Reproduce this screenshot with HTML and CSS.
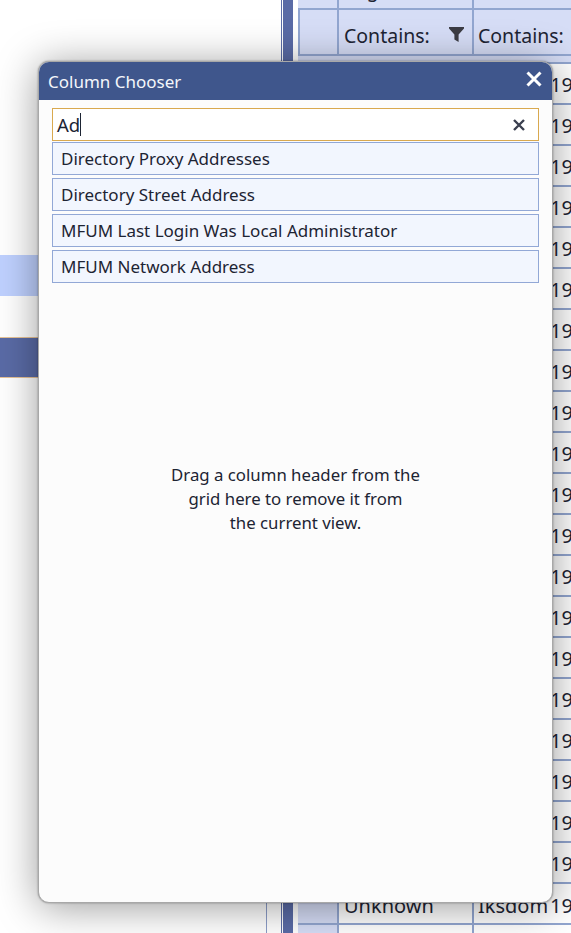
FILE: index.html

```html
<!DOCTYPE html>
<html lang="en">
<head>
    <meta charset="UTF-8">
    <meta name="viewport" content="width=device-width, initial-scale=1.0">
    <title>Column Chooser</title>
    <link rel="stylesheet" href="styles.css">
</head>
<body>
    <div class="page">
        <div class="side">
            <div class="side-row selected"></div>
            <div class="side-row active"></div>
            <div class="side-foot"></div>
        </div>
        <div class="gutter"></div>
        <div class="splitter"></div>

        <div class="grid">
            <div class="row head-top">
                <div class="cell indicator"></div>
                <div class="cell clipped">Logon</div>
                <div class="cell"></div>
                <div class="cell"></div>
            </div>
            <div class="row filter">
                <div class="cell indicator"></div>
                <div class="cell">Contains:
                    <svg class="funnel" viewBox="0 0 15 15"><path d="M0 0H15V1.5L9.6 7.4V15L5.4 12.6V7.4L0 1.5Z"/></svg>
                </div>
                <div class="cell">Contains:</div>
                <div class="cell"></div>
            </div>
            <div class="row"><div class="cell indicator"></div><div class="cell"></div><div class="cell"></div><div class="cell">19</div></div>
            <div class="row"><div class="cell indicator"></div><div class="cell"></div><div class="cell"></div><div class="cell">19,</div></div>
            <div class="row"><div class="cell indicator"></div><div class="cell"></div><div class="cell"></div><div class="cell">19</div></div>
            <div class="row"><div class="cell indicator"></div><div class="cell"></div><div class="cell"></div><div class="cell">19,</div></div>
            <div class="row"><div class="cell indicator"></div><div class="cell"></div><div class="cell"></div><div class="cell">19</div></div>
            <div class="row"><div class="cell indicator"></div><div class="cell"></div><div class="cell"></div><div class="cell">19,</div></div>
            <div class="row"><div class="cell indicator"></div><div class="cell"></div><div class="cell"></div><div class="cell">19</div></div>
            <div class="row"><div class="cell indicator"></div><div class="cell"></div><div class="cell"></div><div class="cell">19,</div></div>
            <div class="row"><div class="cell indicator"></div><div class="cell"></div><div class="cell"></div><div class="cell">19</div></div>
            <div class="row"><div class="cell indicator"></div><div class="cell"></div><div class="cell"></div><div class="cell">19,</div></div>
            <div class="row"><div class="cell indicator"></div><div class="cell"></div><div class="cell"></div><div class="cell">19,</div></div>
            <div class="row"><div class="cell indicator"></div><div class="cell"></div><div class="cell"></div><div class="cell">19</div></div>
            <div class="row"><div class="cell indicator"></div><div class="cell"></div><div class="cell"></div><div class="cell">19</div></div>
            <div class="row"><div class="cell indicator"></div><div class="cell"></div><div class="cell"></div><div class="cell">19,</div></div>
            <div class="row"><div class="cell indicator"></div><div class="cell"></div><div class="cell"></div><div class="cell">19</div></div>
            <div class="row"><div class="cell indicator"></div><div class="cell"></div><div class="cell"></div><div class="cell">19,</div></div>
            <div class="row"><div class="cell indicator"></div><div class="cell"></div><div class="cell"></div><div class="cell">19</div></div>
            <div class="row"><div class="cell indicator"></div><div class="cell"></div><div class="cell"></div><div class="cell">19</div></div>
            <div class="row"><div class="cell indicator"></div><div class="cell"></div><div class="cell"></div><div class="cell">19</div></div>
            <div class="row"><div class="cell indicator"></div><div class="cell"></div><div class="cell"></div><div class="cell">19</div></div>
            <div class="row last-data"><div class="cell indicator"></div><div class="cell">Unknown</div><div class="cell">Iksdom</div><div class="cell">19</div></div>
            <div class="row"><div class="cell indicator"></div><div class="cell"></div><div class="cell"></div><div class="cell"></div></div>
        </div>

        <div class="chooser">
            <div class="chooser-title">
                <span>Column Chooser</span>
                <svg class="close" viewBox="0 0 16 16"><path d="M1.5 1.5L14.5 14.5M14.5 1.5L1.5 14.5"/></svg>
            </div>
            <div class="chooser-body">
                <div class="search">
                    <span>Ad</span><span class="caret"></span>
                    <svg class="clear" viewBox="0 0 12 12"><path d="M1 1L11 11M11 1L1 11"/></svg>
                </div>
                <div class="column-list">
                    <div class="column-item">Directory Proxy Addresses</div>
                    <div class="column-item">Directory Street Address</div>
                    <div class="column-item">MFUM Last Login Was Local Administrator</div>
                    <div class="column-item">MFUM Network Address</div>
                </div>
                <p class="hint">Drag a column header from the<br>grid here to remove it from<br>the current view.</p>
            </div>
        </div>
    </div>
</body>
</html>
```

FILE: styles.css

```css
* {
    box-sizing: border-box;
}
body {
    margin: 0;
    font-family: "Noto Sans", "Open Sans", sans-serif;
    color: #1d2433;
    background-color: #fff;
}
.page {
    position: relative;
    display: flex;
    width: 571px;
    height: 933px;
    overflow: hidden;
}
.side {
    display: flex;
    flex-direction: column;
    flex: 0 0 267px;
    padding-top: 255px;
}
.side-row {
    height: 41px;
}
.side-row.selected {
    background-color: #bfd1ff;
}
.side-row.active {
    margin-top: 41px;
    background-color: #5a6ba6;
    border-top: 1px solid #e6c296;
    border-bottom: 1px solid #e6c296;
}
.side-foot {
    margin-top: auto;
    height: 100px;
    border-right: 1px solid #8c9dc8;
}
.gutter {
    flex: 0 0 15px;
    border-right: 1px solid #5a6ba6;
}
.splitter {
    flex: 0 0 10px;
    margin-left: 1px;
    margin-right: 5px;
    background-color: #5a6ba6;
}

/* grid behind the dialog */
.grid {
    flex: 1;
    min-width: 0;
}
.row {
    display: grid;
    grid-template-columns: 41px 135px 76px 1fr;
    grid-template-rows: 39px;
    height: 41px;
    border-bottom: 2px solid #92a6d0;
    font-size: 20px;
    line-height: 42px;
}
.cell {
    position: relative;
    padding-left: 5px;
    border-right: 2px solid #92a6d0;
    white-space: nowrap;
}
.cell:nth-child(3) {
    padding-left: 4px;
    border-right: none;
}
.cell:last-child {
    padding-left: 0;
    border-right: none;
}
.indicator {
    background-color: #d6ddf6;
}
.row.last-data {
    line-height: 44px;
}
.row.head-top {
    grid-template-rows: 8px;
    height: 10px;
    background-color: #d6ddf6;
    overflow: hidden;
}
/* only the descender of this label shows above the filter row */
.clipped {
    height: 22px;
    margin-top: -14px;
    line-height: 8px;
}
.row.filter {
    grid-template-rows: 46px;
    height: 54px;
    padding-bottom: 6px;
    background-color: #d6ddf6;
    font-size: 19.5px;
    line-height: 52px;
}
.row.filter .cell {
    border-bottom: 2px solid #92a6d0;
}
.row.filter .indicator {
    border-left: 2px solid #92a6d0;
}
.funnel {
    position: absolute;
    top: 17px;
    right: 8px;
    width: 15px;
    height: 15px;
    fill: #3c3c44;
}

/* column chooser */
.chooser {
    position: absolute;
    left: 38px;
    top: 61px;
    width: 515px;
    height: 842px;
    display: flex;
    flex-direction: column;
    background-color: #fcfcfc;
    border: 1px solid #a8a8a8;
    border-radius: 11px;
    box-shadow: 0 0 2px rgba(0, 0, 0, 0.4), 0 4px 42px rgba(0, 0, 0, 0.4);
    overflow: hidden;
}
.chooser-title {
    display: flex;
    align-items: center;
    justify-content: space-between;
    flex: 0 0 38px;
    padding: 0 10px 0 9px;
    background-color: #3f568c;
    color: #f4f6fb;
    font-size: 17px;
}
.close {
    width: 16px;
    height: 16px;
    margin-top: -4px;
    fill: none;
    stroke: #fff;
    stroke-width: 3;
}
.chooser-body {
    flex: 1;
    padding: 8px 13px 0;
}
.search {
    display: flex;
    align-items: center;
    height: 33px;
    padding: 0 13px 0 4px;
    background-color: #fff;
    border: 1px solid #d9a94f;
    font-size: 18.5px;
}
.caret {
    width: 1px;
    height: 23px;
    background-color: #1d2433;
}
.clear {
    width: 12px;
    height: 12px;
    margin-left: auto;
    fill: none;
    stroke: #3a3f4f;
    stroke-width: 2.4;
}
.column-list {
    display: flex;
    flex-direction: column;
    gap: 3px;
    margin-top: 1px;
}
.column-item {
    height: 33px;
    padding-left: 8px;
    background-color: #f2f6fe;
    border: 1px solid #92a8d6;
    font-size: 17px;
    line-height: 31px;
}
.hint {
    margin: 180px 0 0;
    font-size: 16.8px;
    line-height: 24px;
    text-align: center;
}
```
